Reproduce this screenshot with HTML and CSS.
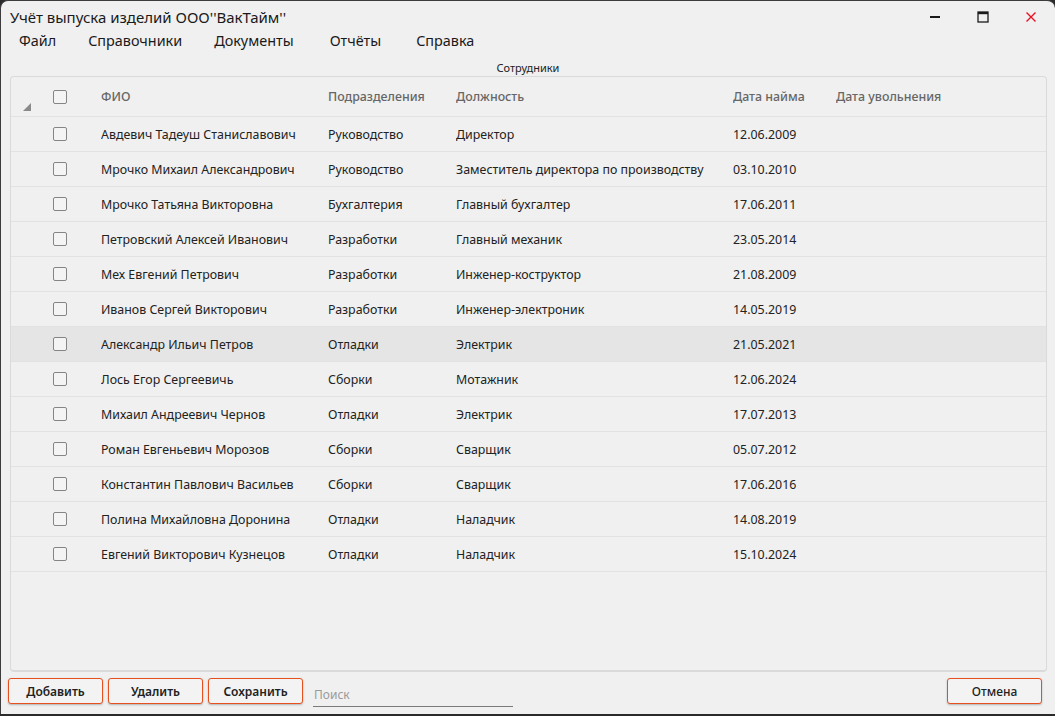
FILE: index.html
```html
<!DOCTYPE html>
<html lang="ru">
<head>
<meta charset="utf-8">
<title>Учёт выпуска изделий</title>
<link rel="stylesheet" href="styles.css">
</head>
<body>
<div class="window">
  <div class="titlebar">
    <div class="title">Учёт выпуска изделий ООО''ВакТайм''</div>
    <div class="controls">
      <span class="ctl"><svg width="12" height="12" viewBox="0 0 12 12"><rect x="1" y="5" width="10" height="2" fill="#1a1a1a"/></svg></span>
      <span class="ctl"><svg width="12" height="12" viewBox="0 0 12 12"><rect x="1" y="1" width="10" height="10" fill="none" stroke="#1a1a1a" stroke-width="1.3"/><rect x="1" y="1" width="10" height="2.2" fill="#1a1a1a"/></svg></span>
      <span class="ctl"><svg width="12" height="12" viewBox="0 0 12 12"><path d="M1.5 1.5 L10.5 10.5 M10.5 1.5 L1.5 10.5" stroke="#e81123" stroke-width="1.4"/></svg></span>
    </div>
  </div>
  <nav class="menu">
    <span class="mi">Файл</span>
    <span class="mi">Справочники</span>
    <span class="mi">Документы</span>
    <span class="mi">Отчёты</span>
    <span class="mi">Справка</span>
  </nav>
  <div class="caption">Сотрудники</div>
  <div class="grid">
    <div class="row head">
      <div class="c ind"><span class="corner"></span></div>
      <div class="c chk"><span class="box"></span></div>
      <div class="c">ФИО</div>
      <div class="c">Подразделения</div>
      <div class="c">Должность</div>
      <div class="c">Дата найма</div>
      <div class="c">Дата увольнения</div>
    </div>
    <div class="row"><div class="c ind"></div><div class="c chk"><span class="box"></span></div><div class="c">Авдевич Тадеуш Станиславович</div><div class="c">Руководство</div><div class="c">Директор</div><div class="c">12.06.2009</div><div class="c"></div></div>
    <div class="row"><div class="c ind"></div><div class="c chk"><span class="box"></span></div><div class="c">Мрочко Михаил Александрович</div><div class="c">Руководство</div><div class="c">Заместитель директора по производству</div><div class="c">03.10.2010</div><div class="c"></div></div>
    <div class="row"><div class="c ind"></div><div class="c chk"><span class="box"></span></div><div class="c">Мрочко Татьяна Викторовна</div><div class="c">Бухгалтерия</div><div class="c">Главный бухгалтер</div><div class="c">17.06.2011</div><div class="c"></div></div>
    <div class="row"><div class="c ind"></div><div class="c chk"><span class="box"></span></div><div class="c">Петровский Алексей Иванович</div><div class="c">Разработки</div><div class="c">Главный механик</div><div class="c">23.05.2014</div><div class="c"></div></div>
    <div class="row"><div class="c ind"></div><div class="c chk"><span class="box"></span></div><div class="c">Мех Евгений Петрович</div><div class="c">Разработки</div><div class="c">Инженер-коструктор</div><div class="c">21.08.2009</div><div class="c"></div></div>
    <div class="row"><div class="c ind"></div><div class="c chk"><span class="box"></span></div><div class="c">Иванов Сергей Викторович</div><div class="c">Разработки</div><div class="c">Инженер-электроник</div><div class="c">14.05.2019</div><div class="c"></div></div>
    <div class="row hover"><div class="c ind"></div><div class="c chk"><span class="box"></span></div><div class="c">Александр Ильич Петров</div><div class="c">Отладки</div><div class="c">Электрик</div><div class="c">21.05.2021</div><div class="c"></div></div>
    <div class="row"><div class="c ind"></div><div class="c chk"><span class="box"></span></div><div class="c">Лось Егор Сергеевичь</div><div class="c">Сборки</div><div class="c">Мотажник</div><div class="c">12.06.2024</div><div class="c"></div></div>
    <div class="row"><div class="c ind"></div><div class="c chk"><span class="box"></span></div><div class="c">Михаил Андреевич Чернов</div><div class="c">Отладки</div><div class="c">Электрик</div><div class="c">17.07.2013</div><div class="c"></div></div>
    <div class="row"><div class="c ind"></div><div class="c chk"><span class="box"></span></div><div class="c">Роман Евгеньевич Морозов</div><div class="c">Сборки</div><div class="c">Сварщик</div><div class="c">05.07.2012</div><div class="c"></div></div>
    <div class="row"><div class="c ind"></div><div class="c chk"><span class="box"></span></div><div class="c">Константин Павлович Васильев</div><div class="c">Сборки</div><div class="c">Сварщик</div><div class="c">17.06.2016</div><div class="c"></div></div>
    <div class="row"><div class="c ind"></div><div class="c chk"><span class="box"></span></div><div class="c">Полина Михайловна Доронина</div><div class="c">Отладки</div><div class="c">Наладчик</div><div class="c">14.08.2019</div><div class="c"></div></div>
    <div class="row"><div class="c ind"></div><div class="c chk"><span class="box"></span></div><div class="c">Евгений Викторович Кузнецов</div><div class="c">Отладки</div><div class="c">Наладчик</div><div class="c">15.10.2024</div><div class="c"></div></div>
  </div>
  <div class="footer">
    <button class="btn">Добавить</button>
    <button class="btn">Удалить</button>
    <button class="btn">Сохранить</button>
    <div class="search">Поиск</div>
    <div class="spacer"></div>
    <button class="btn">Отмена</button>
  </div>
</div>
</body>
</html>
```

FILE: styles.css
```css
html, body {
  margin: 0;
  padding: 0;
  background: #2a2a2a;
}
body {
  width: 1055px;
  height: 716px;
  overflow: hidden;
  font-family: "Noto Sans", "Open Sans", sans-serif;
}
.window {
  box-sizing: border-box;
  width: 1055px;
  height: 714px;
  background: #f0f0f0;
  border-left: 1px solid #3c3c3c;
  border-top: 1px solid #3c3c3c;
  border-radius: 8px 8px 0 0;
  display: flex;
  flex-direction: column;
}
.titlebar {
  height: 30px;
  display: flex;
  align-items: center;
  justify-content: space-between;
}
.title {
  padding-left: 9px;
  margin-top: 2px;
  font-size: 15px;
  color: #1a1a1a;
}
.controls {
  display: flex;
  height: 100%;
  align-items: center;
  margin-top: 2px;
}
.ctl {
  width: 48px;
  display: flex;
  justify-content: center;
}
.menu {
  height: 18px;
  display: flex;
  align-items: center;
  padding-left: 18px;
  font-size: 14.4px;
  color: #1a1a1a;
}
.mi { margin-right: 32px; }
.mi:nth-child(3) { margin-right: 36px; }
.mi:nth-child(4) { margin-right: 35px; }
.caption {
  margin-top: 11px;
  height: 16px;
  text-align: center;
  font-size: 11px;
  color: #222;
}
.grid {
  flex: 1;
  margin: 0 8px 0 9px;
  border: 1px solid #dadada;
  border-bottom-width: 2px;
  border-radius: 4px;
  background: #f0f0f0;
  font-size: 12.4px;
  color: #222;
}
.row {
  display: grid;
  grid-template-columns: 32px 58px 227px 128px 277px 103px 1fr;
  height: 34px;
  border-bottom: 1px solid #e2e2e2;
  align-items: center;
}
.row.head {
  height: 39px;
  color: #666;
  font-weight: 500;
}
.row.hover { background: #e5e5e5; }
.c {
  white-space: nowrap;
  overflow: hidden;
}
.chk {
  padding-left: 10px;
  display: flex;
  align-items: center;
}
.box {
  box-sizing: border-box;
  width: 14px;
  height: 14px;
  border: 1px solid #858585;
  border-radius: 2px;
  background: #f4f4f4;
}
.ind {
  position: relative;
  height: 100%;
}
.corner {
  position: absolute;
  left: 12px;
  bottom: 5px;
  width: 0;
  height: 0;
  border-left: 8px solid transparent;
  border-bottom: 8px solid #8a8a8a;
}
.footer {
  height: 42px;
  display: flex;
  align-items: flex-start;
  padding: 6px 13px 0 7px;
  box-sizing: border-box;
}
.btn {
  width: 95px;
  height: 26px;
  margin-right: 5px;
  border: 1px solid #e6501f;
  border-radius: 3px;
  background: #f3f3f3;
  box-shadow: 0 1px 2px rgba(0,0,0,0.25);
  font-family: "Noto Sans", "Open Sans", sans-serif;
  font-size: 12px;
  font-weight: 600;
  color: #222;
  padding: 0;
}
.footer .btn:last-child { margin-right: 0; font-weight: 500; }
.search {
  margin-left: 5px;
  width: 200px;
  height: 29px;
  box-sizing: border-box;
  border-bottom: 1px solid #7a7a7a;
  font-size: 12px;
  color: #9a9a9a;
  padding: 8px 0 0 1px;
}
.spacer { flex: 1; }
```
